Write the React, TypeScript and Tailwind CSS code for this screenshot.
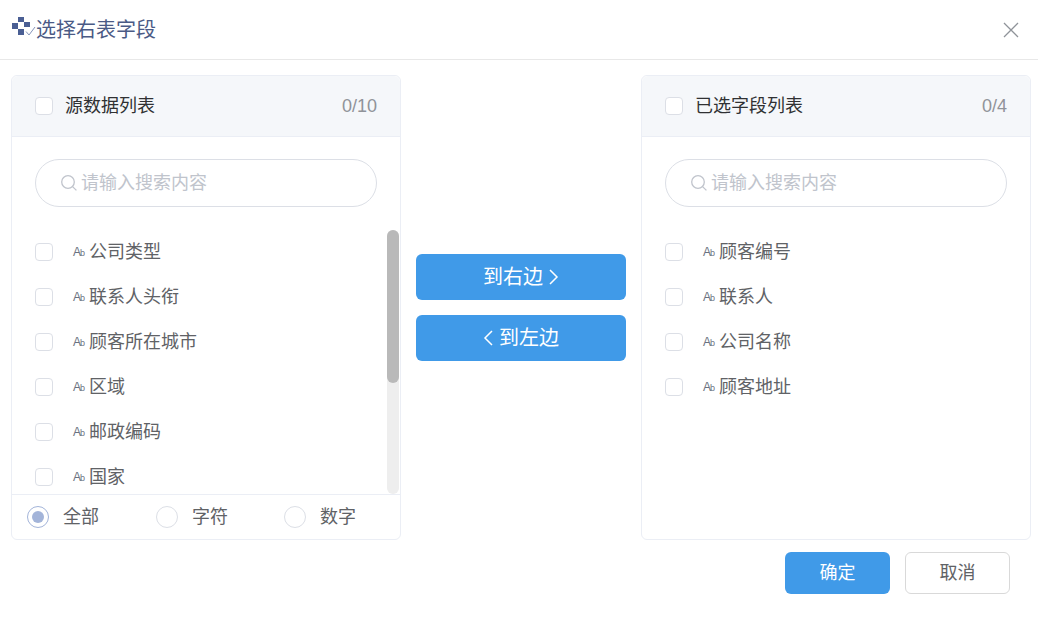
const font = { fontFamily: '"Liberation Sans", "Noto Sans CJK SC", sans-serif' };

function Check() {
  return <span className="block w-[18px] h-[18px] shrink-0 rounded-[4px] border border-[#dcdfe6] bg-white" />;
}

function Field({ label }: { label: string }) {
  return (
    <div className="flex items-center h-[45px] pl-[23px] shrink-0">
      <Check />
      <span className="ml-[20px] w-[16px] text-[12px] tracking-[-1px] text-[#6b7280] whitespace-nowrap">
        A<span className="text-[9px]">b</span>
      </span>
      <span className="text-[#606266] text-[18px] leading-none whitespace-nowrap">{label}</span>
    </div>
  );
}

function Search() {
  return (
    <div className="flex items-center h-[48px] mx-[23px] mt-[22px] rounded-full border border-[#dcdfe6] pl-[24px] text-[18px] text-[#c0c4cc]">
      <svg width="18" height="18" viewBox="0 0 18 18" fill="none" stroke="#c0c4cc" strokeWidth="1.3">
        <circle cx="8" cy="8" r="6.3" />
        <path d="M12.6 12.6 16.4 16.4" />
      </svg>
      <span className="ml-[3px]">请输入搜索内容</span>
    </div>
  );
}

function PanelHeader({ title, count }: { title: string; count: string }) {
  return (
    <div className="flex items-center justify-between h-[61px] pl-[23px] pr-[23px] bg-[#f5f7fa] border-b border-[#ebeef5] rounded-t-[6px] shrink-0">
      <div className="flex items-center">
        <Check />
        <span className="ml-[12px] text-[18px] text-[#303133]">{title}</span>
      </div>
      <span className="text-[18px] text-[#909399]">{count}</span>
    </div>
  );
}

function Radio({ label, on, className }: { label: string; on?: boolean; className: string }) {
  return (
    <div className={`flex items-center ${className}`}>
      <span className={`flex items-center justify-center w-[22px] h-[22px] rounded-full border ${on ? "border-[#a3b4d9]" : "border-[#dcdfe6]"}`}>
        {on && <span className="block w-[12px] h-[12px] rounded-full bg-[#a3b4d9]" />}
      </span>
      <span className="ml-[14px] text-[18px] text-[#606266]">{label}</span>
    </div>
  );
}

const BTN = "flex items-center justify-center w-[210px] h-[46px] rounded-[6px] bg-[#409ae8] text-white text-[20px]";

export default function App() {
  return (
    <div className="w-[1038px] h-[625px] bg-white overflow-hidden flex flex-col" style={font}>
      <header className="flex items-center justify-between h-[60px] border-b border-[#e8e8e8] pl-[12px] pr-[18px] shrink-0">
        <div className="flex items-center">
          <svg width="24" height="24" viewBox="0 0 24 24" className="-mt-[2px]">
            <g fill="#4a5f94">
              <rect x="6" y="0" width="6" height="5" />
              <rect x="0" y="6" width="6" height="6" />
              <rect x="6" y="12" width="6" height="6" />
              <rect x="12" y="5" width="6" height="5" />
            </g>
            <path d="M14 14.5 17 18 23 10" fill="none" stroke="#8494bb" strokeWidth="1" />
          </svg>
          <span className="text-[20px] text-[#4a5a85]">选择右表字段</span>
        </div>
        <svg width="18" height="18" viewBox="0 0 18 18" stroke="#8f9399" strokeWidth="1.3" fill="none">
          <path d="M2 2 16 16M16 2 2 16" />
        </svg>
      </header>

      <main className="flex px-[11px] pt-[15px] shrink-0">
        <section className="w-[390px] h-[465px] border border-[#ebeef5] rounded-[6px] flex flex-col shrink-0">
          <PanelHeader title="源数据列表" count="0/10" />
          <Search />
          <div className="relative mt-[22px] h-[265px] overflow-hidden">
            <Field label="公司类型" />
            <Field label="联系人头衔" />
            <Field label="顾客所在城市" />
            <Field label="区域" />
            <Field label="邮政编码" />
            <Field label="国家" />
            <div className="absolute right-[1px] top-[1px] bottom-0 w-[12px] rounded-[6px] bg-[#eeeeee]">
              <div className="h-[153px] rounded-[6px] bg-[#b9b9b9]" />
            </div>
          </div>
          <div className="flex items-center flex-1 border-t border-[#ebeef5] pl-[15px]">
            <Radio label="全部" on className="w-[129px]" />
            <Radio label="字符" className="w-[128px]" />
            <Radio label="数字" className="w-[80px]" />
          </div>
        </section>

        <div className="w-[240px] shrink-0 flex flex-col items-center gap-[15px] pt-[179px]">
          <button className={BTN}>
            到右边
            <svg width="12" height="18" viewBox="0 0 12 18" fill="none" stroke="white" strokeWidth="1.5" className="ml-[4px]">
              <path d="M3 2 10 9 3 16" />
            </svg>
          </button>
          <button className={BTN}>
            <svg width="12" height="18" viewBox="0 0 12 18" fill="none" stroke="white" strokeWidth="1.5" className="mr-[4px]">
              <path d="M9 2 2 9 9 16" />
            </svg>
            到左边
          </button>
        </div>

        <section className="w-[390px] h-[465px] border border-[#ebeef5] rounded-[6px] flex flex-col shrink-0">
          <PanelHeader title="已选字段列表" count="0/4" />
          <Search />
          <div className="mt-[22px]">
            <Field label="顾客编号" />
            <Field label="联系人" />
            <Field label="公司名称" />
            <Field label="顾客地址" />
          </div>
        </section>
      </main>

      <footer className="flex justify-end gap-[15px] pr-[28px] pt-[12px]">
        <button className="w-[105px] h-[42px] rounded-[6px] bg-[#409ae8] text-white text-[18px]">确定</button>
        <button className="w-[105px] h-[42px] rounded-[6px] border border-[#d9d9d9] bg-white text-[#606266] text-[18px]">取消</button>
      </footer>
    </div>
  );
}
